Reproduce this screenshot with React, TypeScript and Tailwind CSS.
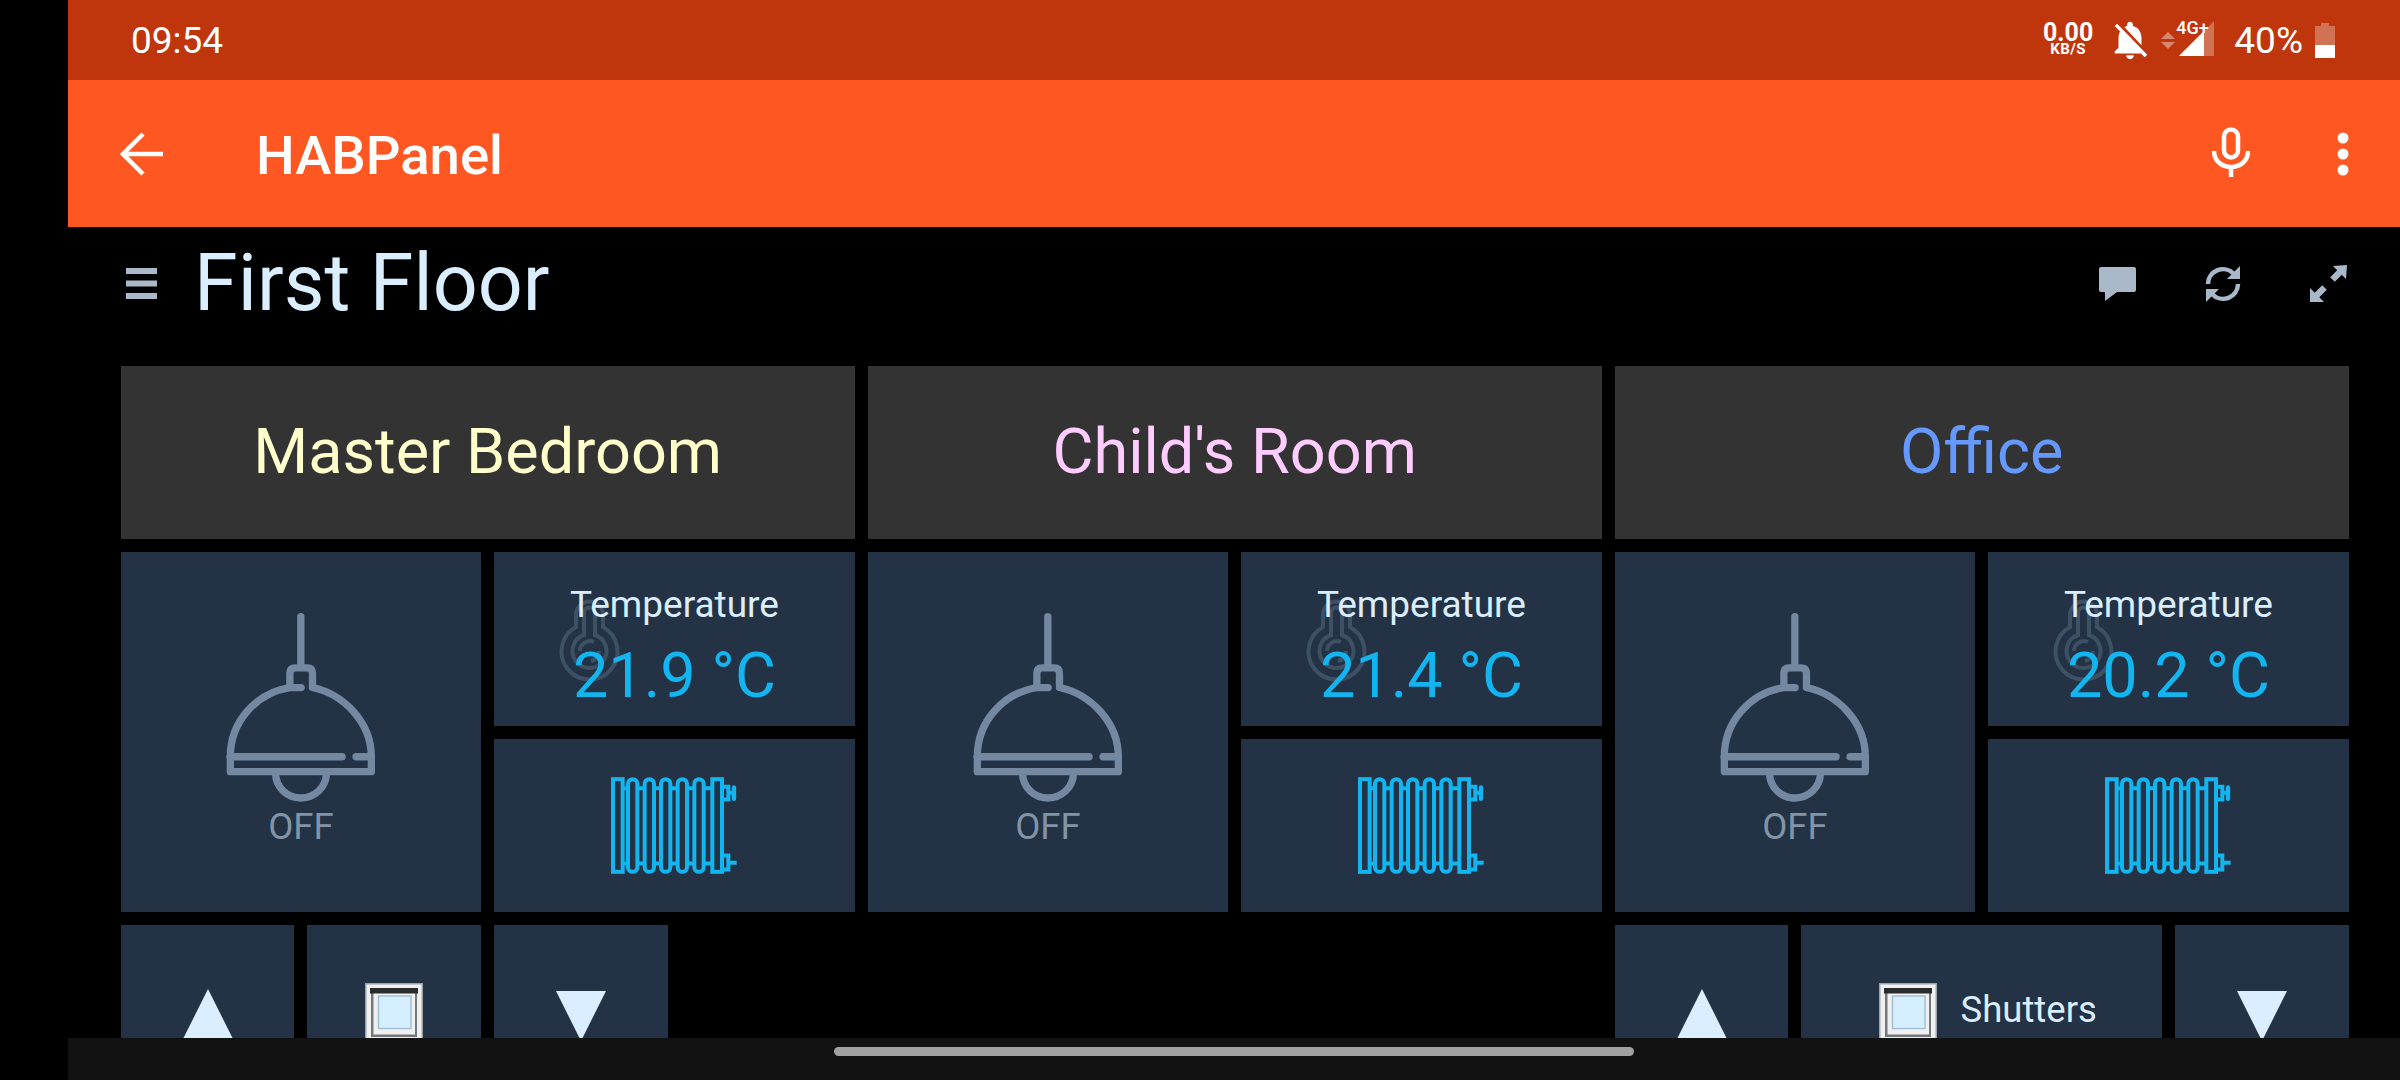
import React from "react";
import { MdNotificationsOff } from "react-icons/md";

const Lamp = () => (
  <svg width="153" height="193" viewBox="340 195 460 580" fill="none" stroke="#7488a2" strokeWidth="22" strokeLinecap="round" strokeLinejoin="round">
    <path d="M571 212V360" />
    <path d="M538 420V382q0-16 16-16H590q16 0 16 16V420" />
    <path d="M359 633C359 525 440 440 538 425H572" />
    <path d="M606 425C700 445 783 530 783 633" />
    <path d="M359 633V678H783V633" />
    <path d="M359 633H695M737 633H783" />
    <path d="M495 682C495 725 530 757 571 757C612 757 648 725 648 682" />
  </svg>
);

const Radiator = () => (
  <svg width="126" height="97" viewBox="33 25 378 290" fill="none" stroke="#12b5f0" strokeWidth="12">
    <rect x="39" y="31" width="29" height="278" />
    <rect x="337" y="31" width="29" height="278" />
    {[98, 148, 197, 247, 297].map((c) => (
      <rect key={c} x={c - 14} y="31" width="28" height="278" rx="14" />
    ))}
    <path d="M68 58H84M112 58H134M162 58H183M211 58H233M261 58H283M311 58H337" />
    <path d="M68 284H84M112 284H134M162 284H183M211 284H233M261 284H283M311 284H337" />
    <path d="M367 54H385V92H367M385 72H404" />
    <path d="M402 56V90" strokeWidth="13" strokeLinecap="round" />
    <path d="M367 260H385V302H367M385 282H410" />
  </svg>
);

const Thermo = () => (
  <svg className="absolute left-[56px] top-[27px]" width="100" height="120" viewBox="0 0 100 120" fill="none" stroke="#3d5064" strokeWidth="4">
    <path d="M26 48V36a13.5 13.5 0 0 1 27 0V48A28 28 0 1 1 26 48Z" />
    <path d="M34 56V34a5.5 5.5 0 0 1 11 0V56A17 17 0 1 1 34 56Z" />
    <path d="M30 72a10 10 0 0 1 14-9M49 72a10 10 0 0 1-8 10" />
  </svg>
);

const WindowIcon = () => (
  <svg width="58" height="58" viewBox="0 0 58 58" className="shrink-0">
    <rect x="0" y="0" width="58" height="58" fill="#9aa4aa" />
    <rect x="1.5" y="1.5" width="55" height="55" fill="#f0f0f0" />
    <rect x="6" y="9" width="46" height="45" fill="#74787b" />
    <rect x="8.5" y="9" width="41.5" height="42.5" fill="#f0f0f0" />
    <rect x="5" y="5" width="48" height="5.5" fill="#2b2b2b" />
    <rect x="13.5" y="13" width="32.5" height="32.5" fill="#d6efff" stroke="#a0c0d8" strokeWidth="1.5" />
  </svg>
);

const Up = () => (
  <svg width="54" height="54" viewBox="0 0 54 54" className="mt-[8px]"><polygon points="27,0 54,54 0,54" fill="#dbeeff" /></svg>
);
const Down = () => (
  <svg width="50" height="50" viewBox="0 0 50 50" className="mt-[8px]"><polygon points="0,0 50,0 25,50" fill="#dbeeff" /></svg>
);

const tile = "bg-[#233345] flex items-center justify-center relative overflow-hidden";

const Room = ({ temp }: { temp: string }) => (
  <>
    <div className={`${tile} col-span-2 row-span-2 flex-col pb-[6px]`}>
      <Lamp />
      <div className="text-[36.5px] leading-[40px] text-[#8294a8] mt-[3px]">OFF</div>
    </div>
    <div className={`${tile} col-span-2 flex-col justify-start pt-[33px]`}>
      <Thermo />
      <div className="relative text-[37px] leading-[40px] text-[#dbeeff]">Temperature</div>
      <div className="relative text-[63px] leading-[72px] text-[#12b5f0] mt-[15px]">{temp}</div>
    </div>
  </>
);

const HeadTile = ({ text, color }: { text: string; color: string }) => (
  <div className="col-span-4 bg-[#333333] flex items-center justify-center text-[63px] leading-none pb-[2px]" style={{ color }}>
    {text}
  </div>
);

export default function App() {
  return (
    <div className="relative w-[2400px] h-[1080px] overflow-hidden bg-black pl-[68px] font-['Roboto','sans-serif']">
      {/* status bar */}
      <div className="h-[80px] bg-[#bf360c] flex items-center text-white">
        <div className="ml-[63px] text-[37px] leading-none">09:54</div>
        <div className="ml-auto flex items-center pr-[65px]">
          <div className="flex flex-col items-center font-bold">
            <div className="text-[25px] leading-[19px]">0.00</div>
            <div className="text-[15px] leading-[15px] tracking-[0.5px]">KB/S</div>
          </div>
          <MdNotificationsOff className="ml-[14px] text-white" size={46} />
          <svg width="14" height="18" viewBox="0 0 14 18" className="ml-[8px] opacity-40 mt-[2px]">
            <polygon points="7,0 14,7 0,7" fill="#fff" />
            <polygon points="0,10 14,10 7,17" fill="#fff" />
          </svg>
          <div className="relative ml-[3px] w-[36px] h-[36px] mt-[-2px]">
            <svg width="36" height="36" viewBox="0 0 36 36" className="absolute left-0 top-0">
              <polygon points="36,0 36,35 1,35" fill="#fff" fillOpacity="0.3" />
              <polygon points="26,10 26,35 1,35" fill="#fff" />
            </svg>
            <div className="absolute left-[-2px] top-[-1px] text-[18px] leading-[15px] font-medium whitespace-nowrap">4G+</div>
          </div>
          <div className="ml-[20px] text-[37px] leading-none">40%</div>
          <svg width="20" height="35" viewBox="0 0 20 35" className="ml-[12px]">
            <path d="M6 0H14V3H20V35H0V3H6Z" fill="#fff" fillOpacity="0.3" />
            <rect x="0" y="22" width="20" height="13" fill="#fff" />
          </svg>
        </div>
      </div>
      {/* app bar */}
      <div className="h-[147px] bg-[#ff5722] flex items-center text-white">
        <svg width="44" height="44" viewBox="0 0 44 44" fill="none" stroke="#fff" strokeWidth="4.5" className="ml-[52px]">
          <path d="M43 22H4M23 2L3 22L23 42" />
        </svg>
        <div className="ml-[92px] mt-[3px] text-[54.5px] leading-none font-medium">HABPanel</div>
        <svg width="38" height="50" viewBox="0 0 38 50" fill="none" stroke="#fff" strokeWidth="4.5" className="ml-auto mt-[-3px]">
          <rect x="12" y="2.5" width="14" height="28" rx="7" />
          <path d="M2 24C2 34 10 40 19 40C28 40 36 34 36 24M19 40V50" />
        </svg>
        <svg width="12" height="44" viewBox="0 0 12 44" className="ml-[87px] mr-[51px]">
          <circle cx="6" cy="6" r="5.5" fill="#fff" />
          <circle cx="6" cy="22" r="5.5" fill="#fff" />
          <circle cx="6" cy="38" r="5.5" fill="#fff" />
        </svg>
      </div>
      {/* dashboard title */}
      <div className="h-[139px] flex items-center pb-[26px]">
        <svg width="31" height="31" viewBox="0 0 31 31" className="ml-[58px]">
          <rect y="0" width="31" height="6" fill="#a9b9c9" />
          <rect y="12.5" width="31" height="6" fill="#a9b9c9" />
          <rect y="25" width="31" height="6" fill="#a9b9c9" />
        </svg>
        <div className="ml-[37px] text-[79px] leading-none text-[#dbeeff]">First Floor</div>
        <div className="ml-auto flex items-center gap-[69px] pr-[53px]">
          <svg width="37" height="35" viewBox="0 0 37 35" className="mt-[1px]">
            <path d="M2 0H35Q37 0 37 2V23Q37 25 35 25H18L6 34V25H2Q0 25 0 23V2Q0 0 2 0Z" fill="#a9b9c9" />
          </svg>
          <svg width="36" height="36" viewBox="0 0 36 36" fill="none" stroke="#a9b9c9" strokeWidth="4.5">
            <path d="M3 18A15 15 0 0 1 29 8" />
            <polygon points="35,0 35,13 22,13" fill="#a9b9c9" stroke="none" />
            <path d="M33 18A15 15 0 0 1 7 28" />
            <polygon points="1,36 1,23 14,23" fill="#a9b9c9" stroke="none" />
          </svg>
          <svg width="37" height="37" viewBox="0 0 37 37" fill="#a9b9c9" stroke="#a9b9c9">
            <polygon points="23,1 37,0 36,14" stroke="none" />
            <path d="M31 6L22.5 14.5" strokeWidth="6.5" />
            <polygon points="0,37 14,37 0,23" stroke="none" />
            <path d="M6 31L14.5 22.5" strokeWidth="6.5" />
          </svg>
        </div>
      </div>
      {/* widgets */}
      <div className="ml-[52.7px] w-[2228px] grid grid-cols-12 auto-rows-[173.3px] gap-[13px]">
        <HeadTile text="Master Bedroom" color="#ffffcc" />
        <HeadTile text="Child's Room" color="#ffccff" />
        <HeadTile text="Office" color="#6699ff" />
        <Room temp="21.9 °C" />
        <Room temp="21.4 °C" />
        <Room temp="20.2 °C" />
        <div className={`${tile} col-start-3 col-span-2 row-start-3`}><Radiator /></div>
        <div className={`${tile} col-start-7 col-span-2 row-start-3`}><Radiator /></div>
        <div className={`${tile} col-start-11 col-span-2 row-start-3`}><Radiator /></div>
        <div className={`${tile} col-start-1 row-start-4`}><Up /></div>
        <div className={`${tile} col-start-2 row-start-4`}><WindowIcon /></div>
        <div className={`${tile} col-start-3 row-start-4`}><Down /></div>
        <div className={`${tile} col-start-9 row-start-4`}><Up /></div>
        <div className={`${tile} col-start-10 col-span-2 row-start-4 gap-[24px] pl-[12px]`}>
          <WindowIcon />
          <div className="text-[36.5px] leading-[40px] text-[#dbeeff] mt-[-3px]">Shutters</div>
        </div>
        <div className={`${tile} col-start-12 row-start-4`}><Down /></div>
      </div>
      {/* navigation bar */}
      <div className="absolute left-[68px] right-0 bottom-0 h-[42px] bg-[#121212] flex justify-center pt-[9px]">
        <div className="w-[800px] h-[9px] rounded-full bg-[#a0a0a0]" />
      </div>
    </div>
  );
}
